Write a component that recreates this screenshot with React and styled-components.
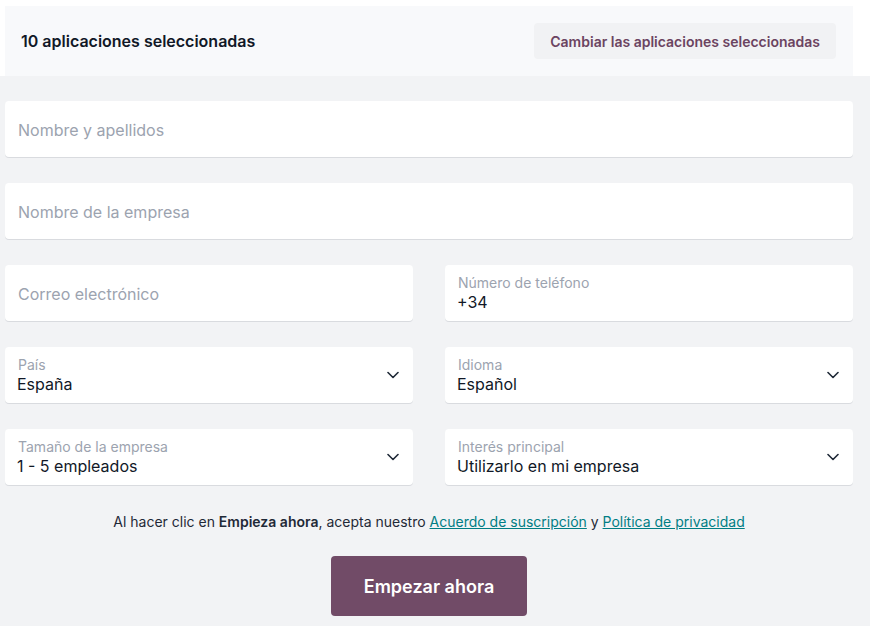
import React from "react";
import styled, { createGlobalStyle } from "styled-components";

const GlobalStyle = createGlobalStyle`
  html, body {
    margin: 0;
    padding: 0;
    background: #ffffff;
    font-family: Inter, "Noto Sans", sans-serif;
    color: #111827;
  }
  * { box-sizing: border-box; }
`;

const Header = styled.div`
  margin: 6px 0 0 5px;
  width: 848px;
  height: 70px;
  background: #f8f9fb;
  display: flex;
  align-items: center;
  justify-content: space-between;
  padding: 0 17px 0 16px;
`;

const Count = styled.div`
  font-size: 16px;
  font-weight: 600;
  color: #111827;
`;

const ChangeButton = styled.button`
  border: none;
  background: #f1f2f4;
  border-radius: 4px;
  height: 36px;
  padding: 0 16px;
  font-family: inherit;
  font-size: 14px;
  font-weight: 600;
  color: #6b4461;
  cursor: pointer;
`;

const FormArea = styled.div`
  background: #f2f3f5;
  min-height: 550px;
  padding: 25px 0 10px 5px;
`;

const Form = styled.form`
  width: 848px;
  display: grid;
  grid-template-columns: 1fr 1fr;
  column-gap: 32px;
  row-gap: 26px;
`;

const Field = styled.div`
  grid-column: ${(p) => (p.$wide ? "1 / -1" : "auto")};
  position: relative;
  height: 56px;
  background: #ffffff;
  border-radius: 4px;
  box-shadow: 0 1px 0 #d9dbdf;
  display: flex;
  flex-direction: column;
  justify-content: ${(p) => (p.$filled ? "flex-start" : "center")};
  padding: ${(p) => (p.$filled ? "9px 13px 0 13px" : "2px 13px 0")};
`;

const Placeholder = styled.div`
  font-size: 16px;
  color: #9ca3af;
`;

const Label = styled.div`
  font-size: 14px;
  line-height: 18px;
  color: #9ca3af;
`;

const Value = styled.div`
  font-size: 16px;
  line-height: 20px;
  color: #111827;
  margin-left: -1px;
`;

const Chevron = styled.svg`
  position: absolute;
  right: 14px;
  top: 24px;
`;

const Terms = styled.p`
  margin: 27px 0 0;
  width: 848px;
  text-align: center;
  font-size: 14px;
  line-height: 20px;
  color: #1f2937;

  b { font-weight: 600; }
  a {
    color: #017e84;
    text-decoration: underline;
  }
`;

const Actions = styled.div`
  width: 848px;
  display: flex;
  justify-content: center;
  margin-top: 24px;
`;

const Submit = styled.button`
  width: 196px;
  height: 60px;
  border: none;
  border-radius: 4px;
  background: #714b67;
  color: #ffffff;
  font-family: inherit;
  font-size: 18px;
  font-weight: 600;
  cursor: pointer;
`;

const Down = () => (
  <Chevron width="12" height="8" viewBox="0 0 12 8" fill="none">
    <path d="M1 1.5l5 5 5-5" stroke="#1f2937" strokeWidth="1.6" strokeLinecap="round" strokeLinejoin="round" />
  </Chevron>
);

const InputBox = ({ placeholder, wide }) => (
  <Field $wide={wide}>
    <Placeholder>{placeholder}</Placeholder>
  </Field>
);

const FilledBox = ({ label, value, select }) => (
  <Field $filled>
    <Label>{label}</Label>
    <Value>{value}</Value>
    {select && <Down />}
  </Field>
);

export default function App() {
  return (
    <>
      <GlobalStyle />
      <Header>
        <Count>10 aplicaciones seleccionadas</Count>
        <ChangeButton>Cambiar las aplicaciones seleccionadas</ChangeButton>
      </Header>
      <FormArea>
        <Form>
          <InputBox wide placeholder="Nombre y apellidos" />
          <InputBox wide placeholder="Nombre de la empresa" />
          <InputBox placeholder="Correo electrónico" />
          <FilledBox label="Número de teléfono" value="+34" />
          <FilledBox label="País" value="España" select />
          <FilledBox label="Idioma" value="Español" select />
          <FilledBox label="Tamaño de la empresa" value="1 - 5 empleados" select />
          <FilledBox label="Interés principal" value="Utilizarlo en mi empresa" select />
        </Form>
        <Terms>
          Al hacer clic en <b>Empieza ahora</b>, acepta nuestro{" "}
          <a href="#">Acuerdo de suscripción</a> y{" "}
          <a href="#">Política de privacidad</a>
        </Terms>
        <Actions>
          <Submit type="button">Empezar ahora</Submit>
        </Actions>
      </FormArea>
    </>
  );
}
